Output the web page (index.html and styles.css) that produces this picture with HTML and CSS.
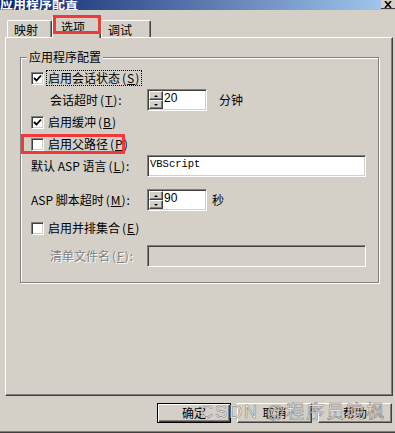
FILE: index.html
```html
<!DOCTYPE html>
<html lang="zh-CN">
<head>
  <meta charset="UTF-8">
  <title>应用程序配置</title>
  <link rel="stylesheet" href="styles.css">
</head>
<body>
  <div class="window">
    <div class="titlebar">
      <span class="title">应用程序配置</span>
      <span class="close">
        <svg width="8" height="7" viewBox="0 0 8 7"><path d="M1 0 L7 7 M7 0 L1 7" stroke="#000" stroke-width="1.6"/></svg>
      </span>
    </div>

    <div class="tabs">
      <div class="tab tab-map">映射</div>
      <div class="tab tab-opt active">选项<span class="mark mark-tab"></span></div>
      <div class="tab tab-dbg">调试</div>
    </div>

    <div class="panel">
      <div class="group">
        <span class="legend">应用程序配置</span>

        <div class="row">
          <span class="check"><svg width="9" height="9" viewBox="0 0 9 9"><path d="M1 4 L3.5 6.5 L8 1.5" fill="none" stroke="#000" stroke-width="1.8"/></svg></span>
          <span class="text focus">启用会话状态<span class="key">(<u>S</u>)</span></span>
        </div>

        <div class="row">
          <span class="label indent">会话超时<span class="key">(<u>T</u>)</span>:</span>
          <div class="spin">
            <div class="spin-btns">
              <span class="spin-btn"><i class="up"></i></span>
              <span class="spin-btn"><i class="down"></i></span>
            </div>
            <span class="spin-val">20</span>
          </div>
          <span class="unit unit-min">分钟</span>
        </div>

        <div class="row">
          <span class="check"><svg width="9" height="9" viewBox="0 0 9 9"><path d="M1 4 L3.5 6.5 L8 1.5" fill="none" stroke="#000" stroke-width="1.8"/></svg></span>
          <span class="text">启用缓冲<span class="key">(<u>B</u>)</span></span>
        </div>

        <div class="row marked">
          <span class="check"></span>
          <span class="text">启用父路径<span class="key">(<u>P</u>)</span></span>
          <span class="mark mark-row"></span>
        </div>

        <div class="row">
          <span class="label">默认 ASP 语言<span class="key">(<u>L</u>)</span>:</span>
          <div class="input">VBScript</div>
        </div>

        <div class="row row-gap">
          <span class="label">ASP 脚本超时<span class="key">(<u>M</u>)</span>:</span>
          <div class="spin">
            <div class="spin-btns">
              <span class="spin-btn"><i class="up"></i></span>
              <span class="spin-btn"><i class="down"></i></span>
            </div>
            <span class="spin-val">90</span>
          </div>
          <span class="unit unit-sec">秒</span>
        </div>

        <div class="row row-sm">
          <span class="check"></span>
          <span class="text">启用并排集合<span class="key">(<u>E</u>)</span></span>
        </div>

        <div class="row row-sm">
          <span class="label indent disabled">清单文件名<span class="key">(<u>F</u>)</span>:</span>
          <div class="input input-off"></div>
        </div>
      </div>
    </div>

    <div class="buttons">
      <div class="btn default">确定</div>
      <div class="btn btn-wide">取消</div>
      <div class="btn">帮助</div>
    </div>

    <div class="watermark">CSDN @程序员晚枫</div>
  </div>
</body>
</html>
```

FILE: styles.css
```css
body {
  margin: 0;
  width: 395px;
  height: 433px;
  overflow: hidden;
  background: #d4d0c8;
  font-family: "Noto Sans CJK SC", "Liberation Sans", sans-serif;
  font-size: 12px;
  line-height: 14px;
  color: #000;
}
u {
  text-decoration: underline;
  text-underline-offset: 1px;
}
.key {
  margin-left: 2px;
  letter-spacing: 1px;
}
.window {
  position: relative;
  height: 433px;
  box-sizing: border-box;
  border-bottom: 1px solid #404040;
  box-shadow: inset 0 -1px 0 #808080;
}

/* title bar */
.titlebar {
  height: 10px;
  display: flex;
  justify-content: space-between;
  align-items: flex-end;
  overflow: hidden;
  background: linear-gradient(to right, #0a246a, #a6caf0);
}
.title {
  color: #fff;
  font-weight: bold;
  font-size: 13px;
  line-height: 13px;
  margin-bottom: 1px;
}
.close {
  align-self: flex-start;
  width: 14px;
  height: 9px;
  box-sizing: border-box;
  background: #d4d0c8;
  border-bottom: 1px solid #404040;
  display: flex;
  justify-content: center;
  align-items: flex-end;
}

/* tabs */
.tabs {
  height: 27px;
  display: flex;
  align-items: flex-end;
  padding-left: 7px;
}
.tab {
  height: 17px;
  box-sizing: border-box;
  border-top: 1px solid #fff;
  border-left: 1px solid #fff;
  border-right: 1px solid #404040;
  box-shadow: inset -1px 0 0 #808080;
  border-radius: 2px 2px 0 0;
  padding: 2px 0 0 6px;
}
.tab-map { width: 45px; }
.tab-opt { width: 49px; }
.tab-dbg { width: 50px; }
.tab.active {
  position: relative;
  z-index: 1;
  height: 21px;
  margin-bottom: -1px;
  padding-left: 8px;
  background: #d4d0c8;
}

/* red annotation boxes */
.mark {
  position: absolute;
  box-sizing: border-box;
  border: 3px solid #f03a3a;
}
.mark-tab {
  left: 0;
  top: -3px;
  width: 48px;
  height: 19px;
}
.mark-row {
  left: -10px;
  top: 1px;
  width: 104px;
  height: 20px;
}

/* tab page */
.panel {
  margin-left: 5px;
  width: 388px;
  height: 359px;
  box-sizing: border-box;
  border-top: 1px solid #fff;
  border-left: 1px solid #fff;
  border-right: 1px solid #404040;
  border-bottom: 1px solid #404040;
  box-shadow: inset -1px -1px 0 #808080;
  padding: 19px 0 0 14px;
}
.group {
  position: relative;
  width: 359px;
  box-sizing: border-box;
  border: 1px solid #808080;
  box-shadow: inset 1px 1px 0 #fff, 1px 1px 0 #fff;
  padding: 9px 12px 15px 10px;
}
.legend {
  position: absolute;
  top: -8px;
  left: 6px;
  padding: 0 2px;
  background: #d4d0c8;
}

/* rows */
.row {
  position: relative;
  display: flex;
  align-items: center;
  height: 22px;
}
.row-gap { margin-top: 12px; }
.row-sm { margin-top: 6px; }
.check {
  width: 13px;
  height: 13px;
  box-sizing: border-box;
  background: #fff;
  border-top: 1px solid #808080;
  border-left: 1px solid #808080;
  border-right: 1px solid #fff;
  border-bottom: 1px solid #fff;
  box-shadow: inset 1px 1px 0 #404040, inset -1px -1px 0 #d4d0c8;
  margin-right: 3px;
  display: flex;
  align-items: center;
  justify-content: center;
}
.text {
  padding: 0 1px;
}
.label {
  width: 116px;
  flex-shrink: 0;
  white-space: nowrap;
}
.focus {
  outline: 1px dotted #000;
}
.label.indent {
  margin-left: 19px;
  width: 97px;
}
.disabled {
  color: #808080;
  text-shadow: 1px 1px 0 #fff;
}

/* spinner and inputs */
.spin {
  width: 60px;
  height: 22px;
  box-sizing: border-box;
  padding: 1px;
  display: flex;
  background: #fff;
  border-top: 1px solid #808080;
  border-left: 1px solid #808080;
  border-right: 1px solid #fff;
  border-bottom: 1px solid #fff;
  box-shadow: inset 1px 1px 0 #404040, inset -1px -1px 0 #d4d0c8;
}
.spin-btns {
  width: 14px;
  display: flex;
  flex-direction: column;
}
.spin-btn {
  height: 9px;
  box-sizing: border-box;
  background: #d4d0c8;
  border-top: 1px solid #fff;
  border-left: 1px solid #fff;
  border-right: 1px solid #404040;
  border-bottom: 1px solid #404040;
  box-shadow: inset -1px -1px 0 #808080;
  display: flex;
  justify-content: center;
  align-items: center;
}
.up {
  border-left: 2px solid transparent;
  border-right: 2px solid transparent;
  border-bottom: 2px solid #000;
}
.down {
  border-left: 2px solid transparent;
  border-right: 2px solid transparent;
  border-top: 2px solid #000;
}
.spin-val {
  font-family: "Liberation Sans", sans-serif;
  font-size: 12px;
  line-height: 14px;
  padding-left: 1px;
}
.unit-min { margin-left: 12px; }
.unit-sec { margin-left: 5px; }
.input {
  width: 219px;
  height: 22px;
  box-sizing: border-box;
  padding: 0 0 0 2px;
  background: #fff;
  border-top: 1px solid #808080;
  border-left: 1px solid #808080;
  border-right: 1px solid #fff;
  border-bottom: 1px solid #fff;
  box-shadow: inset 1px 1px 0 #404040, inset -1px -1px 0 #d4d0c8;
  font-family: "Liberation Mono", monospace;
  font-size: 10.5px;
  line-height: 17px;
}
.input-off {
  background: #d4d0c8;
}

/* dialog buttons */
.buttons {
  display: flex;
  justify-content: flex-end;
  gap: 6px;
  padding-right: 3px;
  margin-top: 7px;
}
.btn {
  width: 74px;
  height: 20px;
  box-sizing: border-box;
  text-align: center;
  line-height: 17px;
  border-top: 1px solid #fff;
  border-left: 1px solid #fff;
  border-right: 1px solid #404040;
  border-bottom: 1px solid #404040;
  box-shadow: inset -1px -1px 0 #808080;
}
.btn-wide { width: 75px; }
.btn.default {
  border: 1px solid #000;
  box-shadow: inset 1px 1px 0 #fff, inset -1px -1px 0 #404040, inset -2px -2px 0 #808080;
}

.watermark {
  position: absolute;
  left: 200px;
  top: 402px;
  font-family: "Liberation Sans", "Noto Sans CJK SC", sans-serif;
  font-size: 18px;
  line-height: 20px;
  letter-spacing: 2px;
  color: rgba(255, 255, 255, 0.85);
  -webkit-text-stroke: 0.7px rgba(80, 80, 80, 0.6);
  white-space: nowrap;
}
```
